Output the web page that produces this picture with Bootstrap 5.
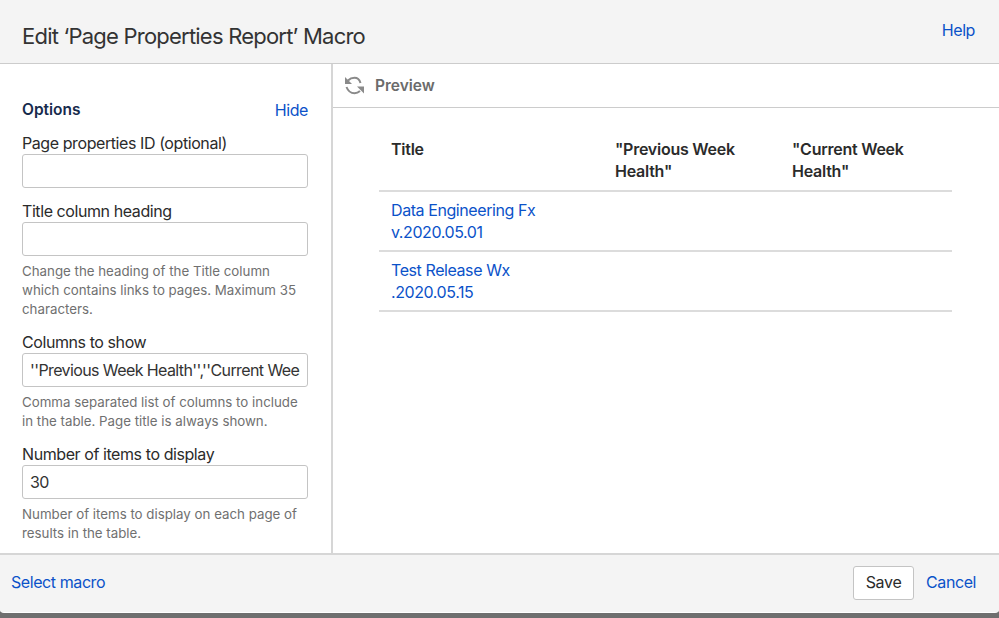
<!DOCTYPE html>
<html lang="en">
<head>
<meta charset="utf-8">
<title>Edit Macro</title>
<link rel="stylesheet" href="https://cdn.jsdelivr.net/npm/bootstrap@5.3.0/dist/css/bootstrap.min.css">
<style>
html,body{height:100%;overflow:hidden}
body{background:#6f6f6f;font-family:Inter,"Liberation Sans",sans-serif;color:#2b2b2b;font-size:16px;line-height:22px;letter-spacing:-.42px}
a{color:#0b52c9;text-decoration:none}
.dlg{height:613px;background:#fff;border-radius:0 0 4px 4px;overflow:hidden}
.dlg-head{height:64px;background:#f4f4f4;border-bottom:1px solid #ccc;padding:0 24px 0 22px}
.dlg-title{font-size:22px;font-weight:400;letter-spacing:-.78px;line-height:28px;margin:9px 0 0;color:#333}
.dlg-main{height:490px}
.side{width:333px;border-right:2px solid #d6d6d6;padding:35px 23px 0 22px;overflow:hidden}
.opt-title{font-size:15.5px;font-weight:600;color:#172b4d;margin:0;letter-spacing:0}
.side-top{margin-bottom:12px}
.fld{margin-bottom:13px}
.fld label{display:block;margin:-1px 0 0;line-height:22px}
.fld .form-control{height:34px;border:1px solid #c4c4c4;border-radius:3px;padding:0 7px;font-size:16px;color:#333;font-family:inherit;letter-spacing:-.6px}
.hint{font-size:13.3px;line-height:19px;color:#707070;margin:6px 0 0;letter-spacing:0}
.prev-bar{height:44px;border-bottom:1px solid #ccc;padding:0 12px}
.prev-bar span{font-size:15.5px;font-weight:600;color:#6b6b6b;margin-left:11px;letter-spacing:0}
.prev-body{padding:30px 46px 0}
.tbl{width:573px;margin:0;table-layout:fixed}
.tbl th,.tbl td{padding:0 12px;border-bottom:2px solid #dcdcdc;line-height:22px;vertical-align:top;color:#2b2b2b}
.tbl th{font-weight:600;padding-top:0;padding-bottom:8px;letter-spacing:-.25px}
.tbl td{padding-top:7px;padding-bottom:7px}
.dlg-foot{height:59px;background:#f4f4f4;border-top:2px solid #d6d6d6;padding:0 23px 3px 11px;margin-top:-1px}
.save-btn{height:34px;width:61px;padding:0 0 2px;margin-top:2px;background:#fff;border:1px solid #c4c4c4;border-radius:3px;font-size:16px;color:#2b2b2b;line-height:1;letter-spacing:-.3px}
</style>
</head>
<body>
<div class="dlg d-flex flex-column">
  <header class="dlg-head d-flex justify-content-between align-items-center flex-shrink-0">
    <h1 class="dlg-title">Edit ‘Page Properties Report’ Macro</h1>
    <a href="#" class="mb-1">Help</a>
  </header>
  <div class="dlg-main d-flex">
    <aside class="side flex-shrink-0">
      <div class="side-top d-flex justify-content-between align-items-center">
        <h2 class="opt-title">Options</h2>
        <a href="#">Hide</a>
      </div>
      <div class="fld"><label for="f1">Page properties ID (optional)</label><input id="f1" class="form-control" type="text"></div>
      <div class="fld"><label for="f2">Title column heading</label><input id="f2" class="form-control" type="text">
        <p class="hint">Change the heading of the Title column which contains links to pages. Maximum 35 characters.</p></div>
      <div class="fld"><label for="f3">Columns to show</label><input id="f3" class="form-control" type="text" value="''Previous Week Health'',''Current Week Health''">
        <p class="hint">Comma separated list of columns to include in the table. Page title is always shown.</p></div>
      <div class="fld"><label for="f4">Number of items to display</label><input id="f4" class="form-control" type="text" value="30">
        <p class="hint">Number of items to display on each page of results in the table.</p></div>
    </aside>
    <main class="flex-grow-1">
      <div class="prev-bar d-flex align-items-center">
        <svg width="19" height="19" viewBox="0 0 19 19" fill="none" stroke="#8a8a8a" stroke-width="2" aria-hidden="true"><path d="M3 4.500C5 2.500 7 1.800 9.500 1.800 12.300 1.800 14.500 3.600 15.500 7"/><path d="M1.500 11C3 15 6 17.200 9.500 17.200 11.500 17.200 13.500 16.400 15 15"/><path d="M0 1v7h7z" fill="#8a8a8a" stroke="none"/><path d="M19 17.500v-7h-7z" fill="#8a8a8a" stroke="none"/></svg>
        <span>Preview</span>
      </div>
      <div class="prev-body">
        <table class="tbl">
          <colgroup><col style="width:224px"><col style="width:177px"><col></colgroup>
          <thead><tr><th>Title</th><th>"Previous Week Health"</th><th>"Current Week Health"</th></tr></thead>
          <tbody>
            <tr><td><a href="#">Data Engineering Fx v.2020.05.01</a></td><td></td><td></td></tr>
            <tr><td><a href="#">Test Release Wx .2020.05.15</a></td><td></td><td></td></tr>
          </tbody>
        </table>
      </div>
    </main>
  </div>
  <footer class="dlg-foot d-flex justify-content-between align-items-center flex-shrink-0">
    <a href="#">Select macro</a>
    <div class="d-flex align-items-center gap-2"><button class="btn save-btn" type="button">Save</button><a href="#" class="ms-1">Cancel</a></div>
  </footer>
</div>
</body>
</html>
